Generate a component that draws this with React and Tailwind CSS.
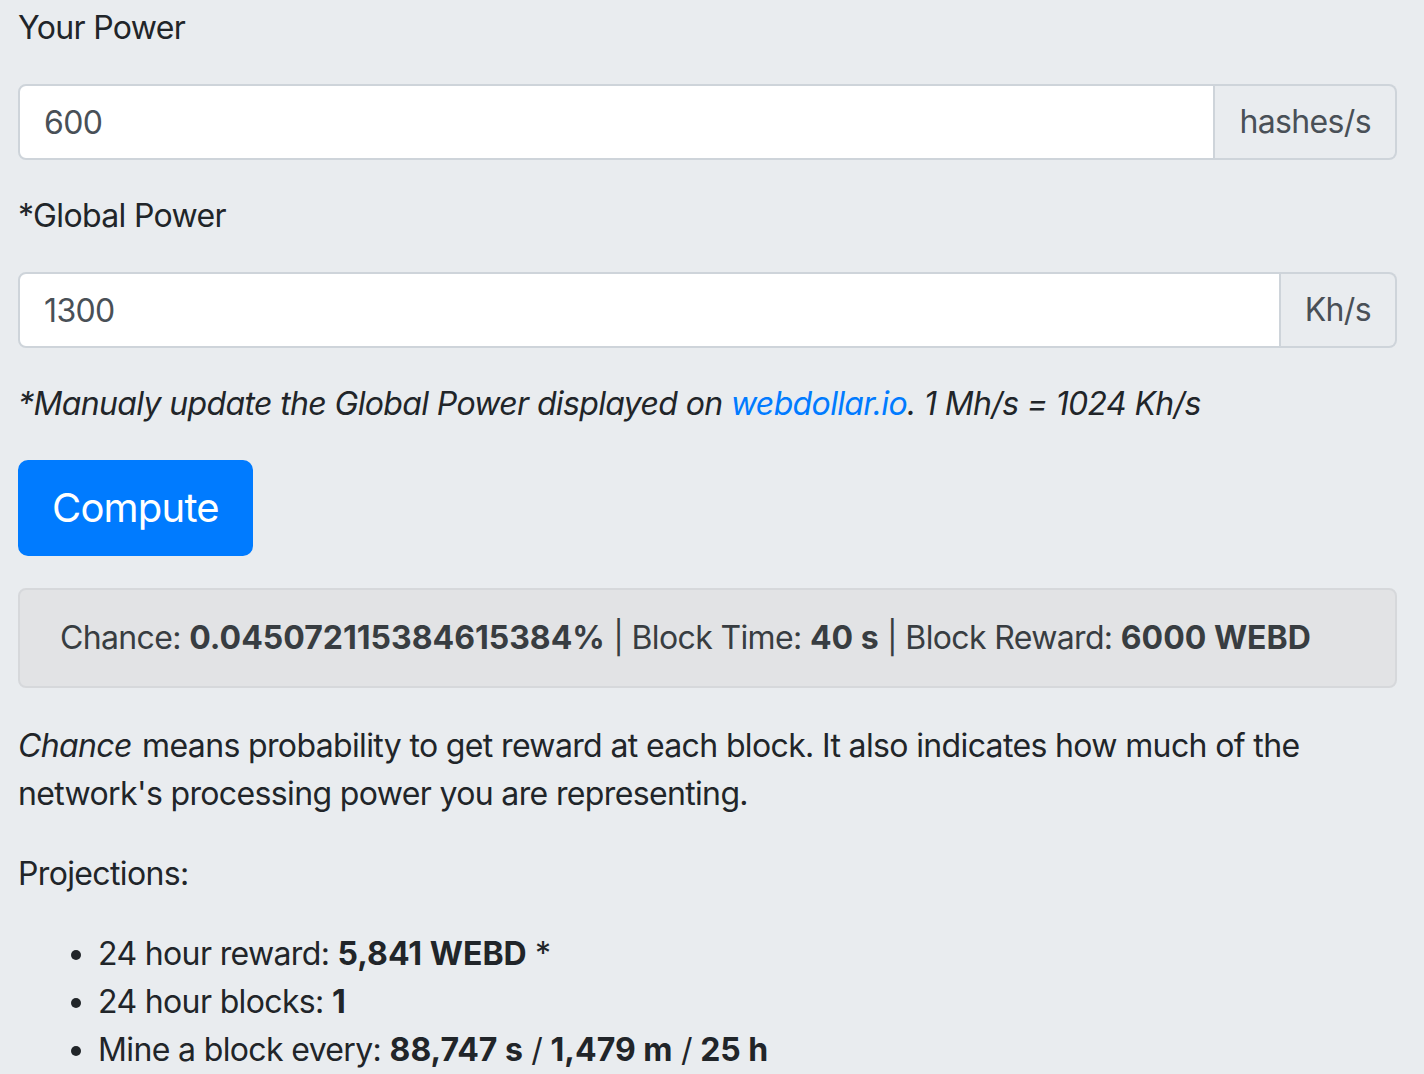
export default function App() {
  const B = ({ children }) => <b className="tracking-normal">{children}</b>;

  return (
    <div
      className="min-h-screen bg-[#e9ecef] text-[#212529] text-[32px] leading-[48px] tracking-[-0.02em] pl-[18px] pr-[27px] pt-1"
      style={{ fontFamily: "Inter, 'Noto Sans', sans-serif" }}
    >
      {/* Your Power */}
      <label className="block mb-8">Your Power</label>
      <div className="flex mb-8">
        <input
          defaultValue="600"
          className="flex-1 min-w-0 h-[76px] px-6 bg-white border-2 border-[#ced4da] rounded-l-lg text-[#495057] tracking-[-0.02em] outline-none"
        />
        <span className="flex items-center px-6 h-[76px] bg-[#e9ecef] border-2 border-l-0 border-[#ced4da] rounded-r-lg text-[#495057]">
          hashes/s
        </span>
      </div>

      {/* Global Power */}
      <label className="block mb-8">*Global Power</label>
      <div className="flex mb-8">
        <input
          defaultValue="1300"
          className="flex-1 min-w-0 h-[76px] px-6 bg-white border-2 border-[#ced4da] rounded-l-lg text-[#495057] tracking-[-0.02em] outline-none"
        />
        <span className="flex items-center px-6 h-[76px] bg-[#e9ecef] border-2 border-l-0 border-[#ced4da] rounded-r-lg text-[#495057]">
          Kh/s
        </span>
      </div>

      <p className="italic mb-8">
        *Manualy update the Global Power displayed on{" "}
        <a href="#" className="text-[#007bff]">webdollar.io</a>. 1 Mh/s = 1024 Kh/s
      </p>

      <button className="bg-[#007bff] text-white text-[40px] leading-[60px] tracking-[-0.02em] px-8 py-4 border-2 border-[#007bff] rounded-[10px] mb-8">
        Compute
      </button>

      <div className="bg-[#e2e3e5] border-2 border-[#d6d8db] rounded-lg px-10 py-6 text-[#383d41] mb-[34px]">
        Chance: <B>0.045072115384615384%</B> | Block Time: <B>40 s</B> | Block Reward: <B>6000 WEBD</B>
      </div>

      <p className="mb-8">
        <i className="pr-0.5">Chance</i> means probability to get reward at each block. It also indicates how much of the
        network's processing power you are representing.
      </p>

      <p className="mb-8">Projections:</p>

      <ul className="list-disc pl-20">
        <li>
          24 hour reward: <B>5,841 WEBD</B> *
        </li>
        <li>
          24 hour blocks: <B>1</B>
        </li>
        <li>
          Mine a block every: <B>88,747 s</B> / <B>1,479 m</B> / <B>25 h</B>
        </li>
      </ul>
    </div>
  );
}
